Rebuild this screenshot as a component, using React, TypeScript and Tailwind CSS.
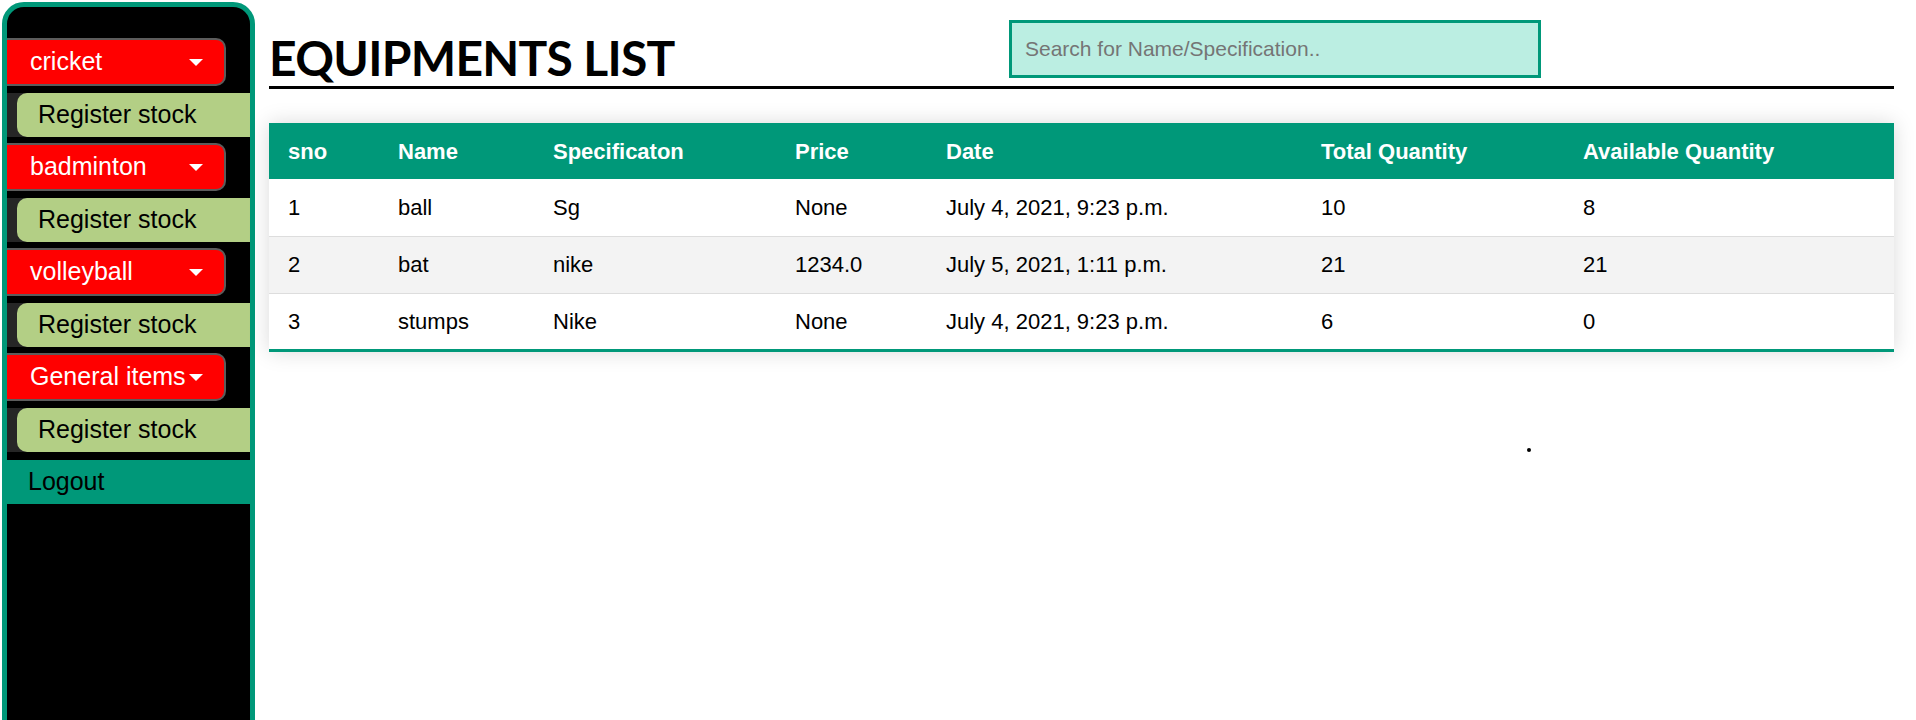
import React from 'react';

const categories = ['cricket', 'badminton', 'volleyball', 'General items'];

const rows = [
    { sno: '1', name: 'ball', spec: 'Sg', price: 'None', date: 'July 4, 2021, 9:23 p.m.', total: '10', avail: '8' },
    { sno: '2', name: 'bat', spec: 'nike', price: '1234.0', date: 'July 5, 2021, 1:11 p.m.', total: '21', avail: '21' },
    { sno: '3', name: 'stumps', spec: 'Nike', price: 'None', date: 'July 4, 2021, 9:23 p.m.', total: '6', avail: '0' },
];

function Caret() {
    return (
        <span className="w-0 h-0 border-l-[7px] border-l-transparent border-r-[7px] border-r-transparent border-t-[7px] border-t-white"></span>
    );
}

function Sidebar() {
    return (
        <aside className="w-[253px] h-[740px] shrink-0 ml-[2px] mt-[2px] bg-black border-[5px] border-[#009879] rounded-t-[22px] pt-[31px] font-['Liberation_Sans',Arial,sans-serif] text-[25px]">
            {categories.map((c) => (
                <div key={c}>
                    {/* dropdown button */}
                    <div className="w-[219px] h-[48px] bg-[#ff0000] border-2 border-l-0 border-[#5c5c5c] rounded-r-[10px] flex items-center justify-between pl-[23px] pr-[21px] text-white">
                        <span>{c}</span>
                        <Caret />
                    </div>
                    {/* dropdown content */}
                    <div className="mt-[7px] mb-[6px] h-[44px] bg-[#262626] pl-[10px]">
                        <a className="h-full flex items-center pl-[21px] bg-[#b3cf85] rounded-l-[10px] text-black">
                            Register stock
                        </a>
                    </div>
                </div>
            ))}
            <div className="mt-[8px] h-[44px] bg-[#009879] flex items-center pl-[21px] text-black">Logout</div>
        </aside>
    );
}

export default function App() {
    return (
        <div className="h-[720px] overflow-hidden bg-white flex">
            <Sidebar />

            <main className="flex-1 ml-[14px] mr-[22px]">
                {/* Header */}
                <div className="flex items-end border-b-[3px] border-black">
                    <h1 className="w-[740px] mb-[4px] text-[48px] leading-[48px] font-bold tracking-[-0.7px] text-black font-['Lato',sans-serif]">
                        EQUIPMENTS LIST
                    </h1>
                    <input
                        type="text"
                        placeholder="Search for Name/Specification.."
                        className="mt-[20px] mb-[8px] w-[532px] h-[58px] border-[3px] border-[#009879] bg-[#bbeee2] pl-[13px] text-[21px] placeholder:text-[#757575] font-['Liberation_Sans',Arial,sans-serif] outline-none"
                    />
                </div>

                {/* Table */}
                <table className="mt-[34px] w-full table-fixed border-collapse shadow-[0_0_20px_rgba(0,0,0,0.15)] font-['Liberation_Sans',Arial,sans-serif] text-[22px] text-black">
                    <colgroup>
                        <col className="w-[110px]" />
                        <col className="w-[155px]" />
                        <col className="w-[242px]" />
                        <col className="w-[151px]" />
                        <col className="w-[375px]" />
                        <col className="w-[262px]" />
                        <col />
                    </colgroup>
                    <thead>
                        <tr className="bg-[#009879] text-white text-left h-[56px]">
                            <th className="pl-[19px] font-bold">sno</th>
                            <th className="pl-[19px] font-bold">Name</th>
                            <th className="pl-[19px] font-bold">Specificaton</th>
                            <th className="pl-[19px] font-bold">Price</th>
                            <th className="pl-[19px] font-bold">Date</th>
                            <th className="pl-[19px] font-bold">Total Quantity</th>
                            <th className="pl-[19px] font-bold">Available Quantity</th>
                        </tr>
                    </thead>
                    <tbody>
                        {rows.map((r, i) => (
                            <tr
                                key={r.sno}
                                className={
                                    i === rows.length - 1
                                        ? 'h-[57px] bg-white border-b-[3px] border-[#009879]'
                                        : i % 2 === 1
                                          ? 'h-[57px] bg-[#f3f3f3] border-b border-[#dddddd]'
                                          : 'h-[57px] bg-white border-b border-[#dddddd]'
                                }
                            >
                                <td className="pl-[19px]">{r.sno}</td>
                                <td className="pl-[19px]">{r.name}</td>
                                <td className="pl-[19px]">{r.spec}</td>
                                <td className="pl-[19px]">{r.price}</td>
                                <td className="pl-[19px]">{r.date}</td>
                                <td className="pl-[19px]">{r.total}</td>
                                <td className="pl-[19px]">{r.avail}</td>
                            </tr>
                        ))}
                    </tbody>
                </table>

                <div className="mt-[96px] ml-[1258px] w-[4px] h-[4px] rounded-full bg-black"></div>
            </main>
        </div>
    );
}
